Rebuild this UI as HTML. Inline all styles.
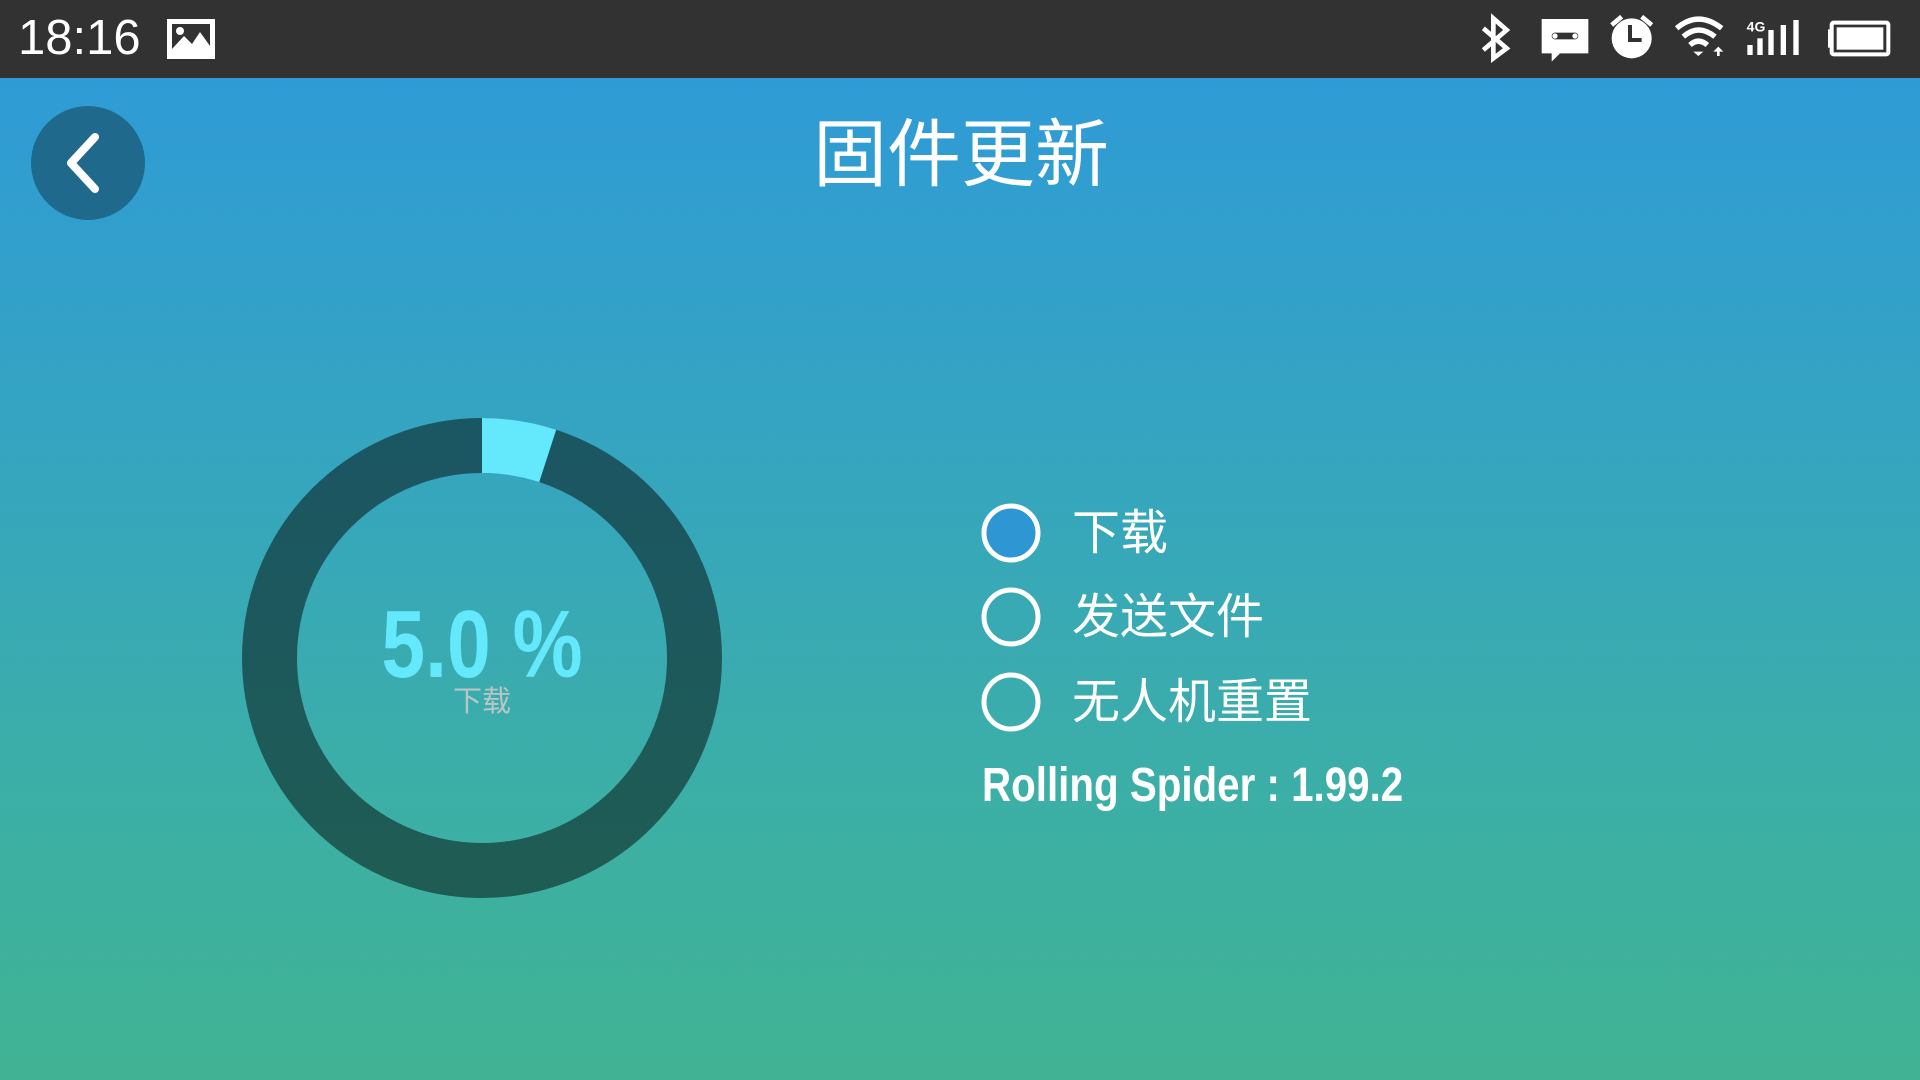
<!DOCTYPE html>
<html><head><meta charset="utf-8"><style>
*{margin:0;padding:0;box-sizing:border-box}
body{width:1920px;height:1080px;overflow:hidden;position:relative;font-family:"Liberation Sans","Noto Sans CJK SC",sans-serif;background:linear-gradient(#2f9bd6 78px,#35a5c0 450px,#3cafa6 800px,#41b393 1080px)}
.sb{position:absolute;left:0;top:0;width:1920px;height:78px;background:#323232}
.abs{position:absolute}
</style></head><body>
<div class="sb">
<div class="abs" style="left:18px;top:10px;font-size:49px;color:#fff;font-weight:300;letter-spacing:0px;transform:scaleX(1.0);transform-origin:left">18:16</div>
<svg class="abs" style="left:166px;top:18px" width="50" height="42" viewBox="0 0 50 42"><rect x="1" y="1" width="48" height="40" fill="#fff"/><rect x="6" y="6" width="38" height="25" fill="#323232"/><circle cx="14" cy="13" r="4" fill="#fff"/><path d="M6 31 L18 18 L26 26 L34 14 L44 28 L44 31Z" fill="#fff"/></svg>
<svg class="abs" style="left:1460px;top:0" width="460" height="78" viewBox="0 0 1380 234" fill="#fff">
<path d="M70 85 L140 145 L100 175 L100 55 L140 90 L70 150" fill="none" stroke="#fff" stroke-width="14"/>
<path d="M245 57 H385 V160 H300 L275 185 V160 H245Z"/><circle cx="285" cy="108" r="10" fill="#323232"/><circle cx="345" cy="108" r="10" fill="#323232"/><rect x="285" y="98" width="60" height="20" fill="#323232"/><circle cx="285" cy="108" r="8"/><circle cx="345" cy="108" r="8"/>
<circle cx="515" cy="115" r="60"/><path d="M510 75 V120 H545" fill="none" stroke="#323232" stroke-width="12"/><path d="M455 75 L485 50" stroke="#fff" stroke-width="14"/><path d="M575 75 L545 50" stroke="#fff" stroke-width="14"/>
<path d="M650 85 Q715 30 785 85" fill="none" stroke="#fff" stroke-width="16"/><path d="M670 110 Q715 70 765 110" fill="none" stroke="#fff" stroke-width="16"/><path d="M690 135 Q715 112 742 135" fill="none" stroke="#fff" stroke-width="16"/><path d="M700 155 L730 155 L715 168Z"/><path d="M775 140 L790 155 H760Z"/><rect x="771" y="150" width="8" height="18"/>
<text x="860" y="95" font-size="42" font-weight="bold" font-family="Liberation Sans Narrow,Liberation Sans">4G</text>
<rect x="862" y="135" width="16" height="30"/><rect x="892" y="115" width="16" height="50"/><rect x="925" y="90" width="16" height="75"/><rect x="1000" y="60" width="16" height="105"/><rect x="962" y="75" width="16" height="90"/>
<rect x="1115" y="68" width="170" height="95" rx="6" fill="none" stroke="#fff" stroke-width="12"/><rect x="1130" y="82" width="140" height="67"/><rect x="1104" y="88" width="10" height="55"/>
</svg>
</div>
<svg class="abs" style="left:31px;top:106px" width="114" height="114"><circle cx="57" cy="57" r="57" fill="#1f6a8c"/><path d="M64 31 L40 57 L64 83" fill="none" stroke="#fff" stroke-width="8" stroke-linecap="round" stroke-linejoin="round"/></svg>
<div class="abs" style="left:0;width:1922px;top:110px;text-align:center;font-size:74px;color:#fff;line-height:90px">固件更新</div>
<svg class="abs" style="left:242px;top:418px" width="480" height="480" viewBox="0 0 480 480">
<defs><linearGradient id="g" x1="0" y1="0" x2="0" y2="1"><stop offset="0" stop-color="#1b5663"/><stop offset="1" stop-color="#1f5c54"/></linearGradient></defs>
<circle cx="240" cy="240" r="212.5" fill="none" stroke="url(#g)" stroke-width="55"/>
<path d="M240 0 A240 240 0 0 1 314.2 11.7 L297.2 64.1 A185 185 0 0 0 240 55Z" fill="#64e8fb"/>
</svg>
<div class="abs" style="left:332px;width:300px;top:590px;text-align:center;font-size:96px;font-weight:bold;color:#64e8fb;line-height:110px;transform:scaleX(.82)">5.0 %</div>
<div class="abs" style="left:432px;width:100px;top:684px;text-align:center;font-size:29px;color:#b9c6c4;line-height:36px">下载</div>
<svg class="abs" style="left:980px;top:500px" width="64" height="240"><circle cx="31" cy="33" r="27" fill="#2e96d3" stroke="#fff" stroke-width="5"/><circle cx="31" cy="117" r="27" fill="none" stroke="#fff" stroke-width="5"/><circle cx="31" cy="202" r="27" fill="none" stroke="#fff" stroke-width="5"/></svg>
<div class="abs" style="left:1072px;top:501px;font-size:48px;color:#fff;line-height:66px">下载</div>
<div class="abs" style="left:1072px;top:585px;font-size:48px;color:#fff;line-height:66px">发送文件</div>
<div class="abs" style="left:1072px;top:670px;font-size:48px;color:#fff;line-height:66px">无人机重置</div>
<div class="abs" style="left:982px;top:756px;font-size:48px;font-weight:bold;color:#fff;line-height:60px;white-space:nowrap;transform:scaleX(.84);transform-origin:left">Rolling Spider : 1.99.2</div>
</body></html>
